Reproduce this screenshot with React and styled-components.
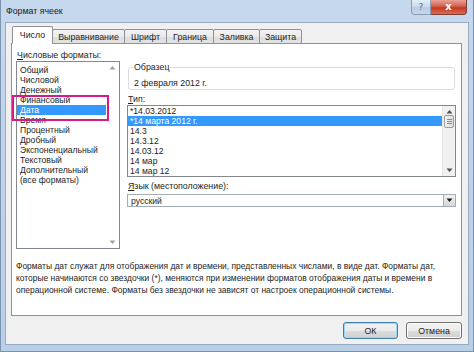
import React from "react";
import styled, { createGlobalStyle } from "styled-components";

const FONT = `"Liberation Sans", Arial, sans-serif`;

const Global = createGlobalStyle`
  html, body { margin: 0; padding: 0; background: #ffffff; }
  body { font-family: ${FONT}; }
  * { box-sizing: border-box; }
`;

const Window = styled.div`
  width: 474px;
  height: 352px;
  display: flex;
  flex-direction: column;
  background: linear-gradient(180deg, #c6d8ed 0%, #bfd3ea 40%, #b9cfe8 100%);
  border: 1px solid #7d93b0;
  border-top: none;
  font-family: ${FONT};
  font-size: 8.8px;
  color: #1e1e1e;
  overflow: hidden;
`;

const TitleBar = styled.div`
  height: 22px;
  flex: 0 0 22px;
  display: flex;
  align-items: flex-start;
  padding-left: 5px;
`;

const Title = styled.div`
  font-size: 8.8px;
  line-height: 22px;
  color: #1b1b1b;
`;

const Captions = styled.div`
  margin-left: auto;
  margin-right: 6px;
  display: flex;
`;

const CapBtn = styled.div`
  width: ${(p) => p.$w}px;
  height: 15px;
  display: flex;
  align-items: center;
  justify-content: center;
  border: 1px solid ${(p) => (p.$close ? "#7e3a32" : "#8a9cb4")};
  border-top: none;
  border-radius: ${(p) => (p.$close ? "0 0 4px 0" : "0 0 0 4px")};
  ${(p) => (p.$close ? "border-left: none;" : "")}
  background: ${(p) =>
    p.$close
      ? "linear-gradient(180deg, #e7a195 0%, #d5604d 45%, #c2391f 55%, #d66e52 100%)"
      : "linear-gradient(180deg, #e4edf7 0%, #ccdbec 45%, #b8cbe2 55%, #c9d9ec 100%)"};
  color: ${(p) => (p.$close ? "#ffffff" : "#5b6f8a")};
  font-family: "DejaVu Sans", sans-serif;
  font-size: ${(p) => (p.$close ? 10 : 9)}px;
  font-weight: ${(p) => (p.$close ? 700 : 400)};
  line-height: 1;
`;

const Body = styled.div`
  flex: 1;
  margin: 0 4px 6px 4px;
  background: #f0f0f0;
  border: 1px solid #9aaabf;
  display: flex;
  flex-direction: column;
  padding: 4px 6px 0 5px;
`;

const Tabs = styled.div`
  height: 17px;
  flex: 0 0 17px;
  display: flex;
  align-items: flex-end;
  padding-left: 1px;
  margin-bottom: -1px;
  position: relative;
  z-index: 1;
`;

const Tab = styled.div`
  width: ${(p) => p.$w}px;
  height: ${(p) => (p.$active ? 18 : 15)}px;
  margin-left: ${(p) => (p.$first ? 0 : -1)}px;
  display: flex;
  align-items: center;
  justify-content: center;
  padding-top: ${(p) => (p.$active ? 0 : 1)}px;
  border: 1px solid #8e9197;
  border-bottom: ${(p) => (p.$active ? "1px solid #ffffff" : "1px solid #8e9197")};
  border-radius: 2px 2px 0 0;
  background: ${(p) =>
    p.$active ? "#ffffff" : "linear-gradient(180deg, #f3f3f3 0%, #ebebeb 50%, #dddddd 51%, #e3e3e3 100%)"};
  font-size: 8.8px;
  color: #1e1e1e;
  white-space: nowrap;
`;

const Panel = styled.div`
  height: 273px;
  flex: 0 0 273px;
  background: #ffffff;
  border: 1px solid #8e9197;
  position: relative;
  display: flex;
  flex-direction: column;
  padding: 5px 5px 0 4px;
`;

const TopArea = styled.div`
  display: flex;
  align-items: flex-start;
`;

const LeftCol = styled.div`
  display: flex;
  flex-direction: column;
  width: 104px;
`;

const Label = styled.div`
  font-size: 8.8px;
  line-height: ${(p) => p.$lh || 12}px;
  margin-top: ${(p) => p.$mt || 0}px;
  margin-left: ${(p) => p.$ml || 0}px;
  color: #1e1e1e;
  white-space: nowrap;
  & u { text-decoration: underline; text-underline-offset: 1px; }
`;

const ListBox = styled.div`
  width: ${(p) => p.$w}px;
  height: ${(p) => p.$h}px;
  border: 1px solid #828790;
  background: #ffffff;
  display: grid;
  grid-template-columns: 1fr 13px;
  overflow: hidden;
`;

const Rows = styled.div`
  padding-top: ${(p) => p.$pt}px;
  overflow: hidden;
`;

const Row = styled.div`
  height: 10px;
  line-height: 10px;
  padding-left: ${(p) => p.$pl}px;
  font-size: 8.6px;
  white-space: nowrap;
  background: ${(p) => (p.$sel ? "#3399ff" : "transparent")};
  color: ${(p) => (p.$sel ? "#ffffff" : "#1e1e1e")};
`;

const ScrollBar = styled.div`
  display: flex;
  flex-direction: column;
  align-items: center;
  justify-content: space-between;
  background: ${(p) => (p.$track ? "#f0f0f0" : "#ffffff")};
  border-left: ${(p) => (p.$track ? "1px solid #e6e6e6" : "none")};
  padding: 3px 0 3px 0;
`;

const Thumb = styled.div`
  width: 10px;
  height: 13px;
  margin-top: 1px;
  margin-bottom: auto;
  border: 1px solid #9a9a9a;
  border-radius: 2px;
  background: linear-gradient(90deg, #f4f4f4, #dcdcdc);
  display: flex;
  flex-direction: column;
  align-items: center;
  justify-content: center;
  gap: 1px;
  & span { width: 5px; height: 1px; background: #8a8a8a; }
`;

const RightCol = styled.div`
  margin-left: 7px;
  width: 329px;
  display: flex;
  flex-direction: column;
  padding-top: 12px;
`;

const Sample = styled.fieldset`
  margin: 0 0 0 1px;
  width: 327px;
  border: 1px solid #dcdcdc;
  border-radius: 3px;
  padding: 4px 6px 0 5px;
  & legend {
    font-size: 8.8px;
    line-height: 12px;
    padding: 0 1px;
    margin-left: -1px;
    color: #1e1e1e;
  }
`;

const SampleText = styled.div`
  font-size: 8.8px;
  line-height: 12px;
`;

const Combo = styled.div`
  margin-top: 2px;
  height: 13px;
  width: 329px;
  border: 1px solid #a5acb5;
  display: flex;
  align-items: center;
  padding-left: 3px;
  font-size: 8.6px;
  background: #ffffff;
`;

const ComboBtn = styled.div`
  margin-left: auto;
  width: 12px;
  height: 11px;
  border-left: 1px solid #a5acb5;
  background: linear-gradient(180deg, #f2f2f2, #d6d6d6);
  display: flex;
  align-items: center;
  justify-content: center;
`;

const Description = styled.div`
  margin-top: 11px;
  font-size: 8.45px;
  line-height: 12px;
  white-space: nowrap;
  color: #1e1e1e;
`;

const Highlight = styled.div`
  position: absolute;
  left: 0px;
  top: 51px;
  width: 97px;
  height: 26px;
  border: 2px solid #d81b84;
  pointer-events: none;
`;

const Footer = styled.div`
  display: flex;
  justify-content: flex-end;
  gap: 8px;
  padding-top: 6px;
`;

const Button = styled.div`
  width: ${(p) => p.$w}px;
  height: 17px;
  border: 1px solid ${(p) => (p.$default ? "#3c7fb1" : "#707070")};
  border-radius: 3px;
  box-shadow: ${(p) => (p.$default ? "inset 0 0 0 1px #9fd5f6" : "inset 0 0 0 1px #fbfbfb")};
  background: linear-gradient(180deg, #f2f2f2 0%, #ebebeb 50%, #dddddd 51%, #cfcfcf 100%);
  display: flex;
  align-items: center;
  justify-content: center;
  font-size: 8.8px;
  color: #1e1e1e;
`;

const Arrow = ({ up, color = "#a0a0a0", size = 5 }) => (
  <svg width={size + 2} height={size} viewBox="0 0 7 5">
    <path d={up ? "M0.5 4.5 L3.5 1 L6.5 4.5 Z" : "M0.5 0.5 L3.5 4 L6.5 0.5 Z"} fill={color} />
  </svg>
);

const formats = [
  "Общий",
  "Числовой",
  "Денежный",
  "Финансовый",
  "Дата",
  "Время",
  "Процентный",
  "Дробный",
  "Экспоненциальный",
  "Текстовый",
  "Дополнительный",
  "(все форматы)",
];

const types = [
  "*14.03.2012",
  "*14 марта 2012 г.",
  "14.3",
  "14.3.12",
  "14.03.12",
  "14 мар",
  "14 мар 12",
];

const tabs = [
  ["Число", 41],
  ["Выравнивание", 73],
  ["Шрифт", 43],
  ["Граница", 48],
  ["Заливка", 47],
  ["Защита", 43],
];

export default function App() {
  return (
    <>
      <Global />
      <Window>
        <TitleBar>
          <Title>Формат ячеек</Title>
          <Captions>
            <CapBtn $w={20}>?</CapBtn>
            <CapBtn $w={36} $close>
              x
            </CapBtn>
          </Captions>
        </TitleBar>
        <Body>
          <Tabs>
            {tabs.map(([t, w], i) => (
              <Tab key={t} $w={w} $first={i === 0} $active={i === 0}>
                {t}
              </Tab>
            ))}
          </Tabs>
          <Panel>
            <TopArea>
              <LeftCol>
                <Label $ml={1}>
                  <u>Ч</u>исловые форматы:
                </Label>
                <ListBox $w={104} $h={188}>
                  <Rows $pt={3}>
                    {formats.map((f) => (
                      <Row key={f} $pl={3} $sel={f === "Дата"}>
                        {f}
                      </Row>
                    ))}
                  </Rows>
                  <ScrollBar>
                    <Arrow up />
                    <Arrow />
                  </ScrollBar>
                </ListBox>
              </LeftCol>
              <RightCol>
                <Sample>
                  <legend>Образец</legend>
                  <SampleText>2 февраля 2012 г.</SampleText>
                </Sample>
                <Label $lh={11} $mt={4} $ml={1}>
                  <u>Т</u>ип:
                </Label>
                <ListBox $w={329} $h={72}>
                  <Rows $pt={0}>
                    {types.map((t) => (
                      <Row key={t} $pl={2} $sel={t === "*14 марта 2012 г."}>
                        {t}
                      </Row>
                    ))}
                  </Rows>
                  <ScrollBar $track>
                    <Arrow up color="#505050" />
                    <Thumb>
                      <span />
                      <span />
                      <span />
                    </Thumb>
                    <Arrow color="#505050" />
                  </ScrollBar>
                </ListBox>
                <Label $lh={11} $mt={4} $ml={1}>
                  <u>Я</u>зык (местоположение):
                </Label>
                <Combo>
                  русский
                  <ComboBtn>
                    <Arrow color="#1e1e1e" />
                  </ComboBtn>
                </Combo>
              </RightCol>
            </TopArea>
            <Description>
              Форматы дат служат для отображения дат и времени, представленных числами, в виде дат. Форматы дат,
              <br />
              которые начинаются со звездочки (*), меняются при изменении форматов отображения даты и времени в
              <br />
              операционной системе. Форматы без звездочки не зависят от настроек операционной системы.
            </Description>
            <Highlight />
          </Panel>
          <Footer>
            <Button $w={55} $default>
              ОК
            </Button>
            <Button $w={56}>Отмена</Button>
          </Footer>
        </Body>
      </Window>
    </>
  );
}
